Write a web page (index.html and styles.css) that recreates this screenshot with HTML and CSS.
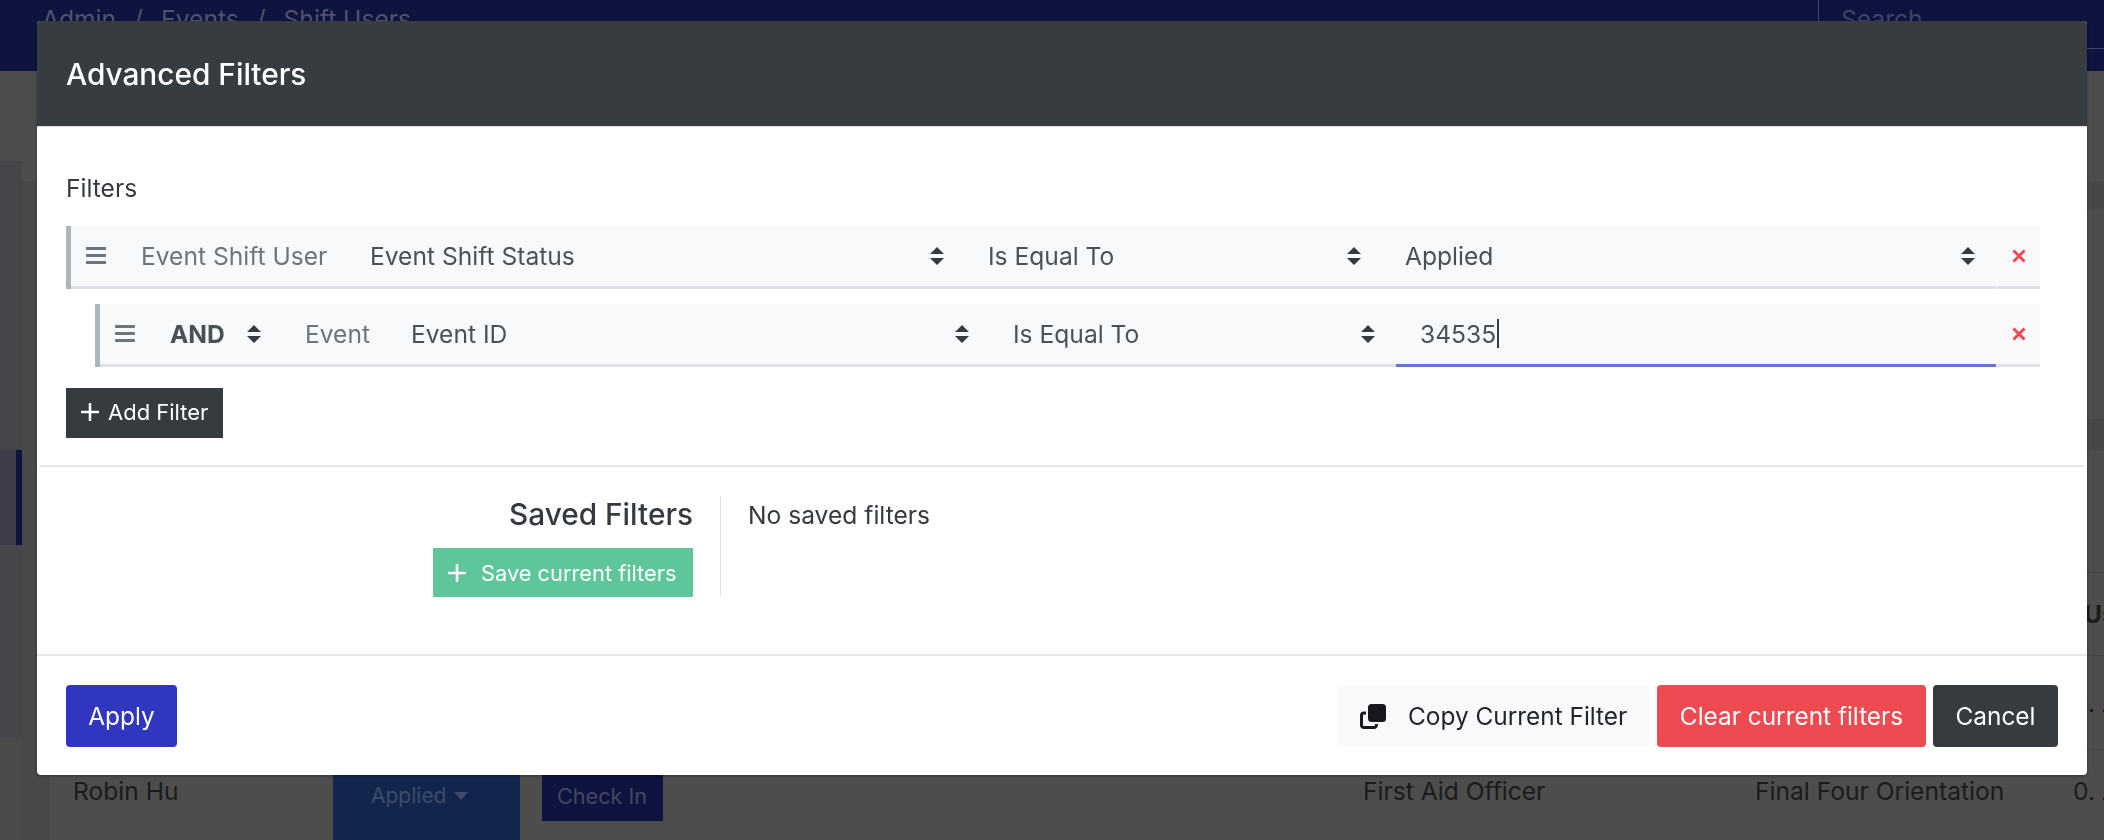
FILE: index.html
```html
<!DOCTYPE html>
<html lang="en">
<head>
<meta charset="utf-8">
<title>Advanced Filters</title>
<link rel="stylesheet" href="styles.css">
</head>
<body>
<svg class="defs" width="0" height="0" aria-hidden="true">
  <symbol id="updown" viewBox="0 0 14 18"><path d="M7 0l7 7H0zM7 18l7-7H0z"/></symbol>
  <symbol id="bars" viewBox="0 0 20 17"><path d="M1 0h18a1 1 0 0 1 1 1.500a1 1 0 0 1-1 1.500H1a1 1 0 0 1-1-1.500a1 1 0 0 1 1-1.500zM1 7h18a1 1 0 0 1 1 1.500a1 1 0 0 1-1 1.500H1a1 1 0 0 1-1-1.500a1 1 0 0 1 1-1.500zM1 14h18a1 1 0 0 1 1 1.500a1 1 0 0 1-1 1.500H1a1 1 0 0 1-1-1.500a1 1 0 0 1 1-1.500z"/></symbol>
  <symbol id="cross" viewBox="0 0 14 14"><path d="M1.500 1.500l11 11M12.500 1.500l-11 11" fill="none" stroke="currentColor" stroke-width="3"/></symbol>
  <symbol id="plus" viewBox="0 0 18 18"><path d="M9 1v16M1 9h16" fill="none" stroke="currentColor" stroke-width="2.600" stroke-linecap="round"/></symbol>
</svg>

<div class="page">
  <header class="topbar">
    <nav class="crumbs"><span>Admin</span><span>/</span><span>Events</span><span>/</span><span>Shift Users</span></nav>
    <div class="search">Search</div>
  </header>
  <div class="main">
    <aside class="sidebar">
      <div class="side-top"></div>
      <div class="side-nav"><div class="side-active"></div></div>
      <div class="side-foot"></div>
    </aside>
    <div class="content">
      <div class="content-head"></div>
      <div class="content-body">
        <div class="gutter"></div>
        <div class="panel">
          <div class="band band-a"></div>
          <div class="band band-b"></div>
          <div class="grid-row head-row"><span class="col-last">Users</span></div>
          <div class="grid-row mid-row"><span class="col-last">0. Alpha</span></div>
          <div class="grid-row last-row">
            <span>Robin Hu</span>
            <div class="status-cell"><div class="status-btn">Applied <i class="caret-down"></i></div></div>
            <div><div class="checkin">Check In</div></div>
            <span>First Aid Officer</span>
            <span>Final Four Orientation</span>
            <span>0. Alpha</span>
          </div>
        </div>
      </div>
    </div>
  </div>
</div>

<section class="modal">
  <header class="modal-head"><h2>Advanced Filters</h2></header>
  <div class="filters">
    <div class="filters-title">Filters</div>
    <div class="row row-one">
      <div class="cell handle"><svg class="i-bars"><use href="#bars"/></svg></div>
      <div class="cell entity entity-one">Event Shift User</div>
      <div class="cell sel s1"><span>Event Shift Status</span><svg class="i-ud"><use href="#updown"/></svg></div>
      <div class="cell sel s2"><span>Is Equal To</span><svg class="i-ud"><use href="#updown"/></svg></div>
      <div class="cell sel s3"><span>Applied</span><svg class="i-ud"><use href="#updown"/></svg></div>
      <div class="cell del"><svg class="i-x"><use href="#cross"/></svg></div>
    </div>
    <div class="row row-two">
      <div class="cell handle"><svg class="i-bars"><use href="#bars"/></svg></div>
      <div class="cell sel logic"><span>AND</span><svg class="i-ud"><use href="#updown"/></svg></div>
      <div class="cell entity entity-two">Event</div>
      <div class="cell sel s4"><span>Event ID</span><svg class="i-ud"><use href="#updown"/></svg></div>
      <div class="cell sel s5"><span>Is Equal To</span><svg class="i-ud"><use href="#updown"/></svg></div>
      <div class="cell value"><span>34535</span><i class="text-caret"></i></div>
      <div class="cell del"><svg class="i-x"><use href="#cross"/></svg></div>
    </div>
    <button class="btn-add"><svg class="i-plus"><use href="#plus"/></svg>Add Filter</button>
  </div>
  <div class="saved">
    <div class="saved-left">
      <h3>Saved Filters</h3>
      <button class="btn-save"><svg class="i-plus"><use href="#plus"/></svg>Save current filters</button>
    </div>
    <div class="saved-right">No saved filters</div>
  </div>
  <footer class="modal-foot">
    <button class="btn btn-apply">Apply</button>
    <div class="foot-right">
      <button class="btn btn-copy">
        <svg class="i-copy" viewBox="0 0 26 25"><rect x="8" y="0" width="18" height="18" rx="3.500" fill="#16181b"/><path d="M6 9H4a2.500 2.500 0 0 0-2.500 2.500v10A2.500 2.500 0 0 0 4 23.500h10a2.500 2.500 0 0 0 2.500-2.500v-1" fill="none" stroke="#16181b" stroke-width="3"/></svg>
        <span>Copy Current Filter</span>
      </button>
      <button class="btn btn-clear">Clear current filters</button>
      <button class="btn btn-cancel">Cancel</button>
    </div>
  </footer>
</section>
</body>
</html>
```
FILE: styles.css
```css
* { box-sizing: border-box; }
html, body { margin: 0; height: 840px; overflow: hidden; }
body { font-family: Inter, "Liberation Sans", sans-serif; font-size: 24.6px; color: #212529; background: #4d4d4d; }
.defs { position: absolute; }
button { font: inherit; border: 0; cursor: pointer; }

/* page behind the modal */
.page { height: 840px; display: flex; flex-direction: column; overflow: hidden; }
.topbar { height: 71px; flex: none; background: #0e1340; display: flex; justify-content: space-between; color: #50536b; }
.crumbs { display: flex; gap: 18px; padding: 4px 0 0 42px; line-height: 30px; }
.search { width: 286px; height: 49px; padding: 4px 0 0 22px; line-height: 30px; border-left: 1px solid #41456a; border-bottom: 1px solid #41456a; color: #3f4362; }
.main { flex: 1; display: flex; min-height: 0; }
.sidebar { width: 22px; flex: none; display: flex; flex-direction: column; }
.side-top { height: 90px; background: #4d4d4d; }
.side-nav { height: 577px; background: #45454a; padding-top: 289px; }
.side-active { height: 95px; background: #3d3d4a; border-right: 6px solid #0e1340; }
.side-foot { flex: 1; background: #4b4b4b; }
.content { flex: 1; display: flex; flex-direction: column; min-width: 0; }
.content-head { height: 110px; flex: none; background: #4d4d4d; }
.content-body { flex: 1; display: flex; min-height: 0; }
.gutter { width: 28px; flex: none; background: #484848; }
.panel { flex: 1; min-width: 0; background: #4d4d4d; color: #1b1b1b; overflow: hidden; }
.band { background: #474747; }
.band-a { height: 28px; }
.band-b { height: 32px; margin-top: 210px; }
.grid-row { display: grid; grid-template-columns: 260px 209px 821px 392px 318px 200px; padding-left: 23px; border-top: 1px solid #444; align-items: center; width: 2300px; white-space: nowrap; }
.col-last { grid-column: 6; }
.head-row { height: 83px; margin-top: 121px; font-weight: 700; }
.head-row .col-last { margin-left: 11px; }
.mid-row { height: 94px; }
.last-row { height: 91px; align-items: start; padding-top: 28px; line-height: 26px; }
.status-cell { margin-top: -40px; }
.status-btn { width: 187px; height: 110px; background: #12264d; color: #3d4b69; padding: 45px 0 0 38px; font-size: 21px; }
.caret-down { display: inline-block; margin-left: 2px; border: 7px solid transparent; border-top: 8px solid #3d4b69; border-bottom: 0; vertical-align: 3px; }
.checkin { width: 121px; height: 52px; margin-top: -9px; background: #0e1340; color: #44485f; font-size: 21.600px; padding: 14px 0 0 15px; }

/* modal */
.modal { position: fixed; left: 37px; top: 21px; width: 2050px; height: 754px; background: #fff; border-radius: 4px; display: flex; flex-direction: column; overflow: hidden; box-shadow: 0 1px 3px rgba(0, 0, 0, .35); }
.modal-head { height: 106px; flex: none; background: #373c40; border-bottom: 1px solid #dee2e6; display: flex; align-items: center; padding-left: 29px; }
.modal-head h2 { margin: 0; font-size: 29.800px; font-weight: 500; color: #fff; line-height: 36px; }
.filters { height: 340px; flex: none; margin: 0 2px; padding: 0 45px 0 27px; border-bottom: 2px solid #e6e7e9; }
.filters-title { height: 99px; padding-top: 46px; line-height: 30px; color: #343a40; }
.row { height: 63px; display: flex; background: #f8f9fa; border-left: 5px solid #adb5bd; color: #495057; }
.row-two { margin: 15px 0 0 29px; }
.cell { display: flex; align-items: center; border-bottom: 3px solid #dee2e6; height: 63px; flex: none; padding-bottom: 1px; white-space: nowrap; }
.handle { width: 70px; padding-left: 15px; }
.i-bars { width: 20px; height: 17px; fill: #6c757d; }
.i-ud { width: 14px; height: 18px; fill: #343a40; flex: none; }
.entity { color: #6c757d; }
.sel { justify-content: space-between; }
.entity-one { width: 212px; }
.s1 { width: 601px; padding: 0 10px 1px 17px; }
.s2 { width: 421px; padding: 0 14px 1px 34px; }
.s3 { width: 621px; padding: 0 21px 1px 30px; }
.logic { width: 135px; padding: 0 44px 1px 0; font-weight: 700; }
.entity-two { width: 89px; }
.s4 { width: 583px; padding: 0 8px 1px 17px; }
.s5 { width: 419px; padding: 0 21px 1px 36px; }
.value { width: 600px; padding-left: 24px; border-bottom-color: #6b70d6; }
.text-caret { width: 2px; height: 29px; background: #343a40; margin-left: 1px; }
.del { flex: 1; justify-content: center; margin-left: 1px; }
.i-x { width: 14px; height: 14px; color: #ef4a51; }
.i-plus { width: 18px; height: 18px; color: #fff; flex: none; }
.btn-add { display: flex; align-items: center; gap: 9px; height: 50px; margin-top: 21px; width: 157px; padding: 0 0 2px 15px; background: #363b3f; color: #fff; font-size: 22px; white-space: nowrap; }

.saved { flex: 1; display: flex; border-bottom: 2px solid #e6e7e9; padding-top: 29px; }
.saved-left { width: 684px; flex: none; height: 101px; display: flex; flex-direction: column; align-items: flex-end; padding-right: 27px; border-right: 1px solid #dee2e6; }
.saved-left h3 { margin: 0; font-size: 29.800px; font-weight: 500; color: #343a40; line-height: 36px; }
.btn-save { display: flex; align-items: center; gap: 15px; width: 260px; height: 50px; margin-top: 16px; padding: 0 0 0 15px; background: #5fc69a; color: #fff; font-size: 21.800px; white-space: nowrap; }
.saved-right { padding: 4px 0 0 27px; line-height: 30px; color: #343a40; }
.modal-foot { height: 119px; flex: none; display: flex; justify-content: space-between; align-items: flex-start; padding: 29px 29px 0; }
.foot-right { display: flex; gap: 7px; }
.btn { height: 62px; border-radius: 4px; font-size: 24.400px; color: #fff; white-space: nowrap; padding: 0; }
.btn-apply { width: 111px; background: #3036c0; }
.btn-copy { width: 312px; background: #f8f9fa; color: #212529; display: flex; align-items: center; padding-left: 22px; gap: 22px; }
.i-copy { width: 26px; height: 25px; flex: none; }
.btn-clear { width: 269px; background: #ed4a51; }
.btn-cancel { width: 125px; background: #363b3f; }
```
